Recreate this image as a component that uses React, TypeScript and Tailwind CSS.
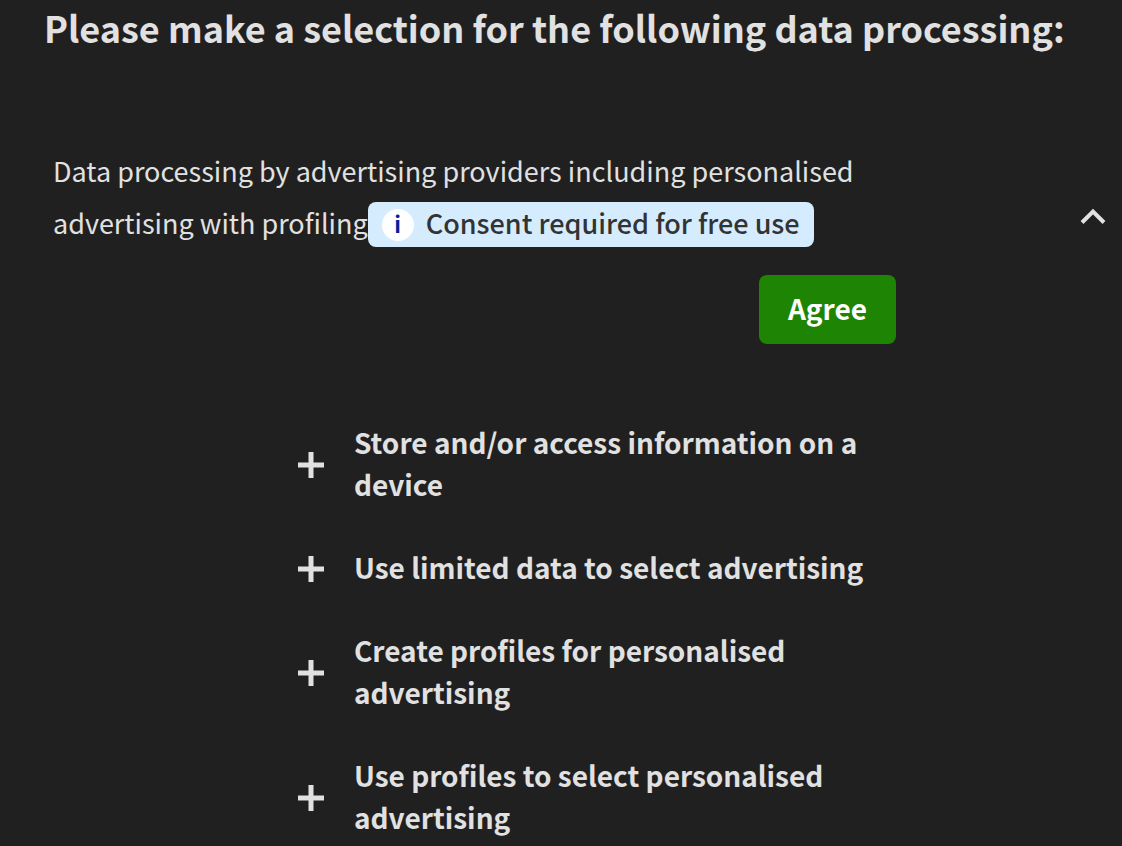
const purposes = [
	"Store and/or access information on a device",
	"Use limited data to select advertising",
	"Create profiles for personalised advertising",
	"Use profiles to select personalised advertising",
]

const InfoBadge = () => (
	<span className="inline-flex items-center gap-3 mb-1 rounded-lg bg-[#d5ecff] h-[45px] pl-3.5 pr-3.5 align-middle text-[27px] leading-8 text-[#333333] font-medium">
		<span className="flex items-center justify-center size-8 pb-1 rounded-full bg-white text-[#0a1e9b] text-[22px] font-bold">
			i
		</span>
		<span className="pb-1">Consent required for free use</span>
	</span>
)

const PurposeRow = ({ label }: { label: string }) => (
	<li>
		<button type="button" className="flex items-center gap-[30px] text-left">
			<svg viewBox="0 0 26 26" className="size-[26px] mt-1 shrink-0" aria-hidden="true">
				<path d="M13 0v26M0 13h26" stroke="currentColor" strokeWidth="5" />
			</svg>
			<span>{label}</span>
		</button>
	</li>
)

const App = () => {
	return (
		<main className="h-screen overflow-hidden bg-[#202020] text-[#e1e1e1] font-['Noto_Sans_CJK_SC',sans-serif]">
			<h1 className="px-11 text-[36px] leading-[54px] font-bold">
				Please make a selection for the following data processing:
			</h1>

			<section className="pt-[91px] pl-[53px] pr-4">
				<div className="flex items-end justify-between">
					<h2 className="max-w-[843px] text-[27px] leading-[52px] font-normal">
						Data processing by advertising providers including personalised advertising with profiling
						<InfoBadge />
					</h2>
					<button type="button" aria-label="Collapse" className="mb-[26px]">
						<svg viewBox="0 0 26 18" className="w-[26px] h-[18px]" aria-hidden="true">
							<path d="M2 15.5L13 4.5L24 15.5" fill="none" stroke="currentColor" strokeWidth="4" />
						</svg>
					</button>
				</div>

				<div className="flex justify-end max-w-[843px] pt-6">
					<button type="button" className="h-[69px] px-[29px] pb-1 rounded-lg bg-[#1e8504] text-white text-[28px] font-bold">
						Agree
					</button>
				</div>

				<ul className="flex flex-col gap-[41px] max-w-[843px] pt-[77px] pl-[245px] text-[28px] leading-[42px] font-bold">
					{purposes.map((label) => (
						<PurposeRow key={label} label={label} />
					))}
				</ul>
			</section>
		</main>
	)
}

export default App
